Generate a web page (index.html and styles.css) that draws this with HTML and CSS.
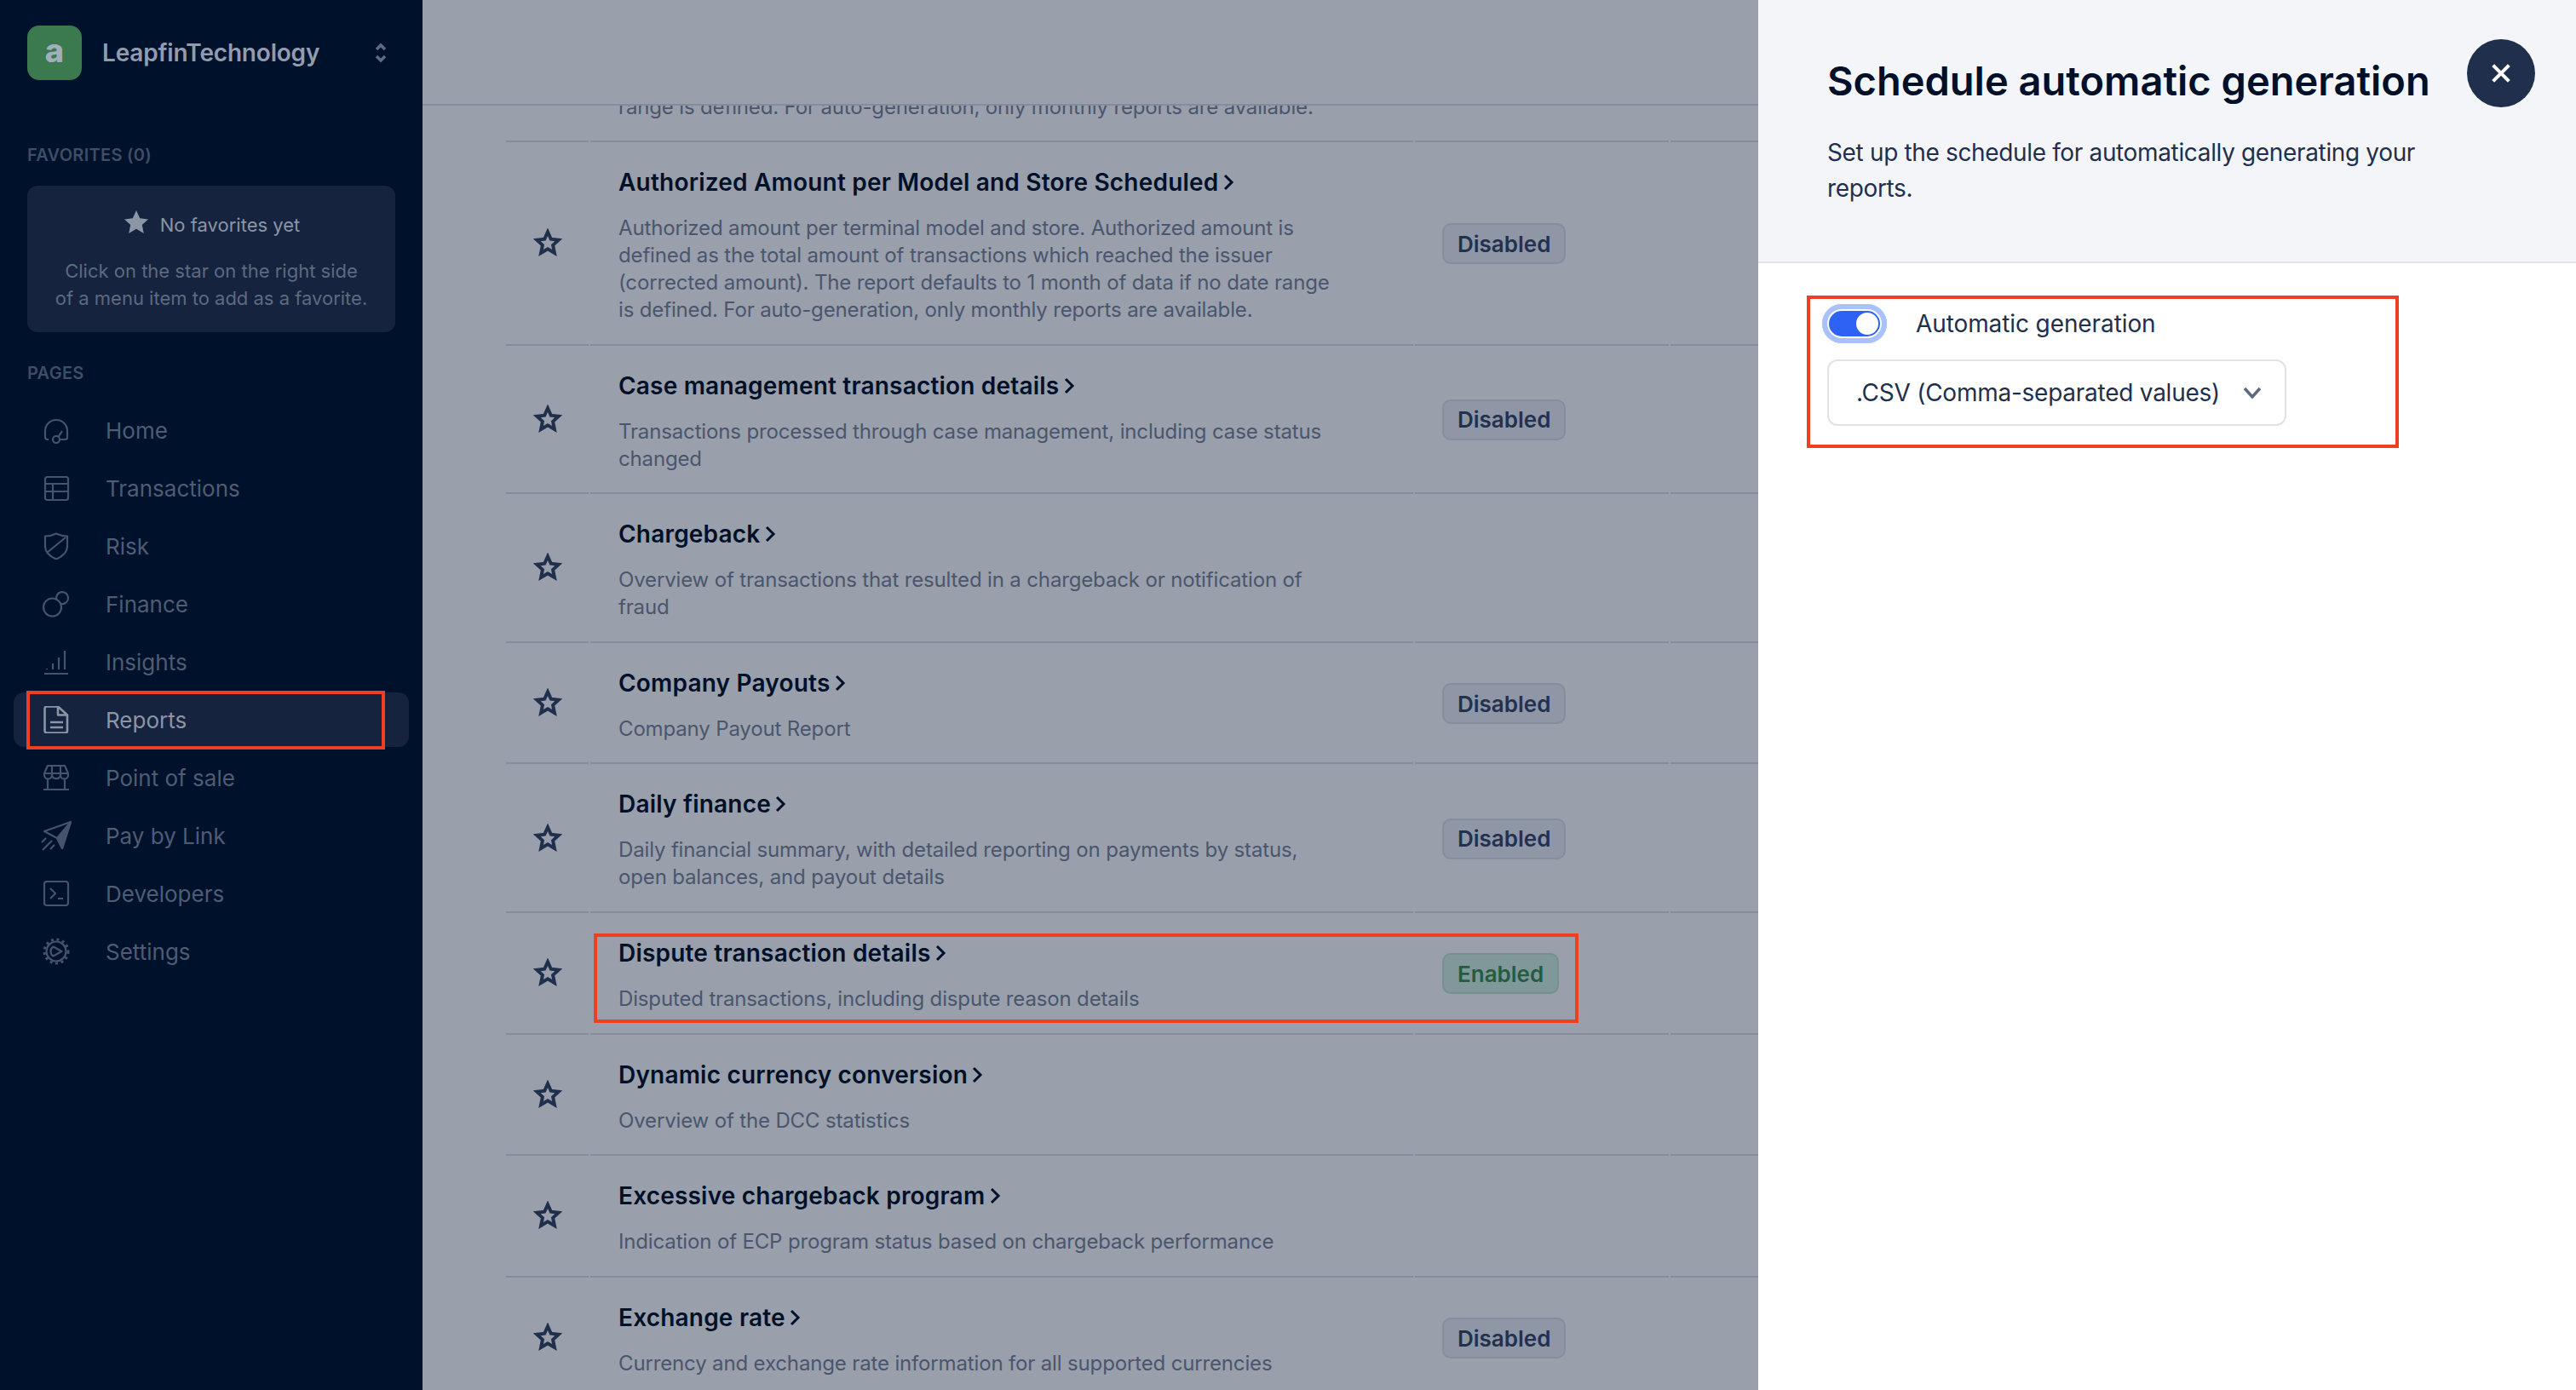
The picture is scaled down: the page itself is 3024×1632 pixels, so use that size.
FILE: index.html
```html
<!DOCTYPE html>
<html lang="en">
<head>
    <meta charset="UTF-8">
    <title>Reports</title>
    <link rel="stylesheet" href="styles.css">
</head>
<body>
    <svg class="sprites" width="0" height="0">
        <symbol id="star" viewBox="0 0 24 24"><path d="M12 3l2.700 6 6.300.7-4.700 4.300 1.300 6.500-5.600-3.300-5.600 3.300 1.300-6.500L3 9.700 9.300 9z"/></symbol>
        <symbol id="caret" viewBox="0 0 14 20"><path d="M3 2l8 8-8 8"/></symbol>
    </svg>

    <aside class="sidebar">
        <div class="brand">
            <span class="brand-logo">a</span>
            <span class="brand-name">LeapfinTechnology</span>
            <svg class="brand-switch" viewBox="0 0 16 26"><path d="M3 9l5-5 5 5M3 17l5 5 5-5"/></svg>
        </div>

        <div class="side-label first">FAVORITES (0)</div>
        <div class="fav-box">
            <div class="fav-title">
                <svg class="fav-star" viewBox="0 0 24 24"><path d="M12 1.500l3.200 7 7.300.8-5.400 5 1.500 7.400-6.600-3.800-6.600 3.800 1.500-7.400-5.400-5 7.300-.8z"/></svg>
                No favorites yet
            </div>
            <p>Click on the star on the right side<br>of a menu item to add as a favorite.</p>
        </div>

        <div class="side-label">PAGES</div>
        <nav class="nav">
            <a class="nav-item">
                <svg viewBox="0 0 32 32"><path d="M7 27H5.500A2.500 2.500 0 0 1 3 24.500V17a13 13 0 0 1 26 0v7.500a2.500 2.500 0 0 1-2.500 2.500H20"/><circle cx="16" cy="27" r="4"/><path d="M18.500 24l4.500-7"/></svg>
                Home
            </a>
            <a class="nav-item">
                <svg viewBox="0 0 32 32"><rect x="3" y="3" width="27" height="27" rx="2.500"/><path d="M3 11h27M3 20h27M12 11v19"/></svg>
                Transactions
            </a>
            <a class="nav-item">
                <svg viewBox="0 0 32 32"><path d="M16 1.500c4 2 8.500 3 13 3v12c0 7-5 11.500-13 15-8-3.500-13-8-13-15v-12c4.500 0 9-1 13-3zM5 24L27 6"/></svg>
                Risk
            </a>
            <a class="nav-item">
                <svg viewBox="0 0 32 32"><circle cx="11.500" cy="20" r="10.500"/><path d="M16.500 11.500a7 7 0 1 1 5.500 4.500"/></svg>
                Finance
            </a>
            <a class="nav-item">
                <svg viewBox="0 0 32 32"><path d="M2 30h28M5 24v1M12 18v7M19 11v14M26 3v22"/></svg>
                Insights
            </a>
            <a class="nav-item active">
                <svg viewBox="0 0 32 32"><path d="M5 .5h13l11 10v18.500a2.500 2.500 0 0 1-2.500 2.500h-21.500a2.500 2.500 0 0 1-2.500-2.500v-26a2.500 2.500 0 0 1 2.500-2.500zM18 1v9.500h11M9 19h15M9 25h15"/></svg>
                Reports
            </a>
            <a class="nav-item">
                <svg viewBox="0 0 32 32"><path d="M6 2h20l4 9v2a4.500 4.500 0 0 1-9 0 4.500 4.500 0 0 1-5 4 4.500 4.500 0 0 1-5-4 4.500 4.500 0 0 1-9 0v-2zM2 11h28M11 2v11M21 2v11M6 18v12M26 18v12M1 30h30"/></svg>
                Point of sale
            </a>
            <a class="nav-item">
                <svg class="plane" viewBox="0 0 36 36"><path d="M4 13L35 2 25 33l-6-12z"/><path class="solid" d="M19 21L35 2 25 33z"/><path d="M2 35l11-11M1 26l5-5M11 34l5-5"/></svg>
                Pay by Link
            </a>
            <a class="nav-item">
                <svg viewBox="0 0 32 32"><rect x="2" y="2" width="28" height="28" rx="3"/><path d="M9 10l6 6-6 6M18 22h6"/></svg>
                Developers
            </a>
            <a class="nav-item">
                <svg viewBox="0 0 32 32"><circle cx="16" cy="16" r="11.500"/><circle class="teeth" cx="16" cy="16" r="14"/><path d="M12.500 10.500l10 5.500-10 5.500a6.500 6.500 0 0 1 0-11z"/></svg>
                Settings
            </a>
        </nav>
    </aside>

    <main class="content">
        <div class="topbar"></div>
        <div class="report-list">
            <div class="row cut">
                <div class="cell-star"></div>
                <div class="cell-main"><p class="desc">range is defined. For auto-generation, only monthly reports are available.</p></div>
                <div class="cell-status"></div>
            </div>
            <div class="row">
                <div class="cell-star"><svg class="star"><use href="#star"/></svg></div>
                <div class="cell-main">
                    <h3>Authorized Amount per Model and Store Scheduled <svg class="caret"><use href="#caret"/></svg></h3>
                    <p class="desc">Authorized amount per terminal model and store. Authorized amount is<br>defined as the total amount of transactions which reached the issuer<br>(corrected amount). The report defaults to 1 month of data if no date range<br>is defined. For auto-generation, only monthly reports are available.</p>
                </div>
                <div class="cell-status"><span class="badge">Disabled</span></div>
            </div>
            <div class="row">
                <div class="cell-star"><svg class="star"><use href="#star"/></svg></div>
                <div class="cell-main">
                    <h3>Case management transaction details <svg class="caret"><use href="#caret"/></svg></h3>
                    <p class="desc">Transactions processed through case management, including case status<br>changed</p>
                </div>
                <div class="cell-status"><span class="badge">Disabled</span></div>
            </div>
            <div class="row">
                <div class="cell-star"><svg class="star"><use href="#star"/></svg></div>
                <div class="cell-main">
                    <h3>Chargeback <svg class="caret"><use href="#caret"/></svg></h3>
                    <p class="desc">Overview of transactions that resulted in a chargeback or notification of<br>fraud</p>
                </div>
                <div class="cell-status"></div>
            </div>
            <div class="row">
                <div class="cell-star"><svg class="star"><use href="#star"/></svg></div>
                <div class="cell-main">
                    <h3>Company Payouts <svg class="caret"><use href="#caret"/></svg></h3>
                    <p class="desc">Company Payout Report</p>
                </div>
                <div class="cell-status"><span class="badge">Disabled</span></div>
            </div>
            <div class="row">
                <div class="cell-star"><svg class="star"><use href="#star"/></svg></div>
                <div class="cell-main">
                    <h3>Daily finance <svg class="caret"><use href="#caret"/></svg></h3>
                    <p class="desc">Daily financial summary, with detailed reporting on payments by status,<br>open balances, and payout details</p>
                </div>
                <div class="cell-status"><span class="badge">Disabled</span></div>
            </div>
            <div class="row">
                <div class="cell-star"><svg class="star"><use href="#star"/></svg></div>
                <div class="cell-main">
                    <h3>Dispute transaction details <svg class="caret"><use href="#caret"/></svg></h3>
                    <p class="desc">Disputed transactions, including dispute reason details</p>
                </div>
                <div class="cell-status"><span class="badge green">Enabled</span></div>
            </div>
            <div class="row">
                <div class="cell-star"><svg class="star"><use href="#star"/></svg></div>
                <div class="cell-main">
                    <h3>Dynamic currency conversion <svg class="caret"><use href="#caret"/></svg></h3>
                    <p class="desc">Overview of the DCC statistics</p>
                </div>
                <div class="cell-status"></div>
            </div>
            <div class="row">
                <div class="cell-star"><svg class="star"><use href="#star"/></svg></div>
                <div class="cell-main">
                    <h3>Excessive chargeback program <svg class="caret"><use href="#caret"/></svg></h3>
                    <p class="desc">Indication of ECP program status based on chargeback performance</p>
                </div>
                <div class="cell-status"></div>
            </div>
            <div class="row">
                <div class="cell-star"><svg class="star"><use href="#star"/></svg></div>
                <div class="cell-main">
                    <h3>Exchange rate <svg class="caret"><use href="#caret"/></svg></h3>
                    <p class="desc">Currency and exchange rate information for all supported currencies</p>
                </div>
                <div class="cell-status"><span class="badge">Disabled</span></div>
            </div>
        </div>
    </main>

    <aside class="panel">
        <header class="panel-head">
            <div class="panel-title-row">
                <h2>Schedule automatic generation</h2>
                <button class="close-btn"><svg viewBox="0 0 24 24"><path d="M4 4l16 16M20 4L4 20"/></svg></button>
            </div>
            <p>Set up the schedule for automatically generating your<br>reports.</p>
        </header>
        <div class="panel-body">
            <div class="toggle-row">
                <span class="toggle"><span class="knob"></span></span>
                <span>Automatic generation</span>
            </div>
            <div class="select">
                <span class="select-value">.CSV (Comma-separated values)</span>
                <svg viewBox="0 0 24 24"><path d="M3 7l9 10 9-10"/></svg>
            </div>
        </div>
    </aside>

    <div class="mark mark-nav"></div>
    <div class="mark mark-row"></div>
    <div class="mark mark-panel"></div>
</body>
</html>
```

FILE: styles.css
```css
* {
    box-sizing: border-box;
}
html, body {
    height: 100%;
}
body {
    margin: 0;
    display: flex;
    height: 1632px;
    overflow: hidden;
    position: relative;
    font-family: Inter, "Noto Sans", sans-serif;
    background: #999fab;
    color: #001029;
}
.sprites {
    position: absolute;
}

/* sidebar */
.sidebar {
    width: 496px;
    flex: none;
    background: #00112b;
}
.brand {
    display: flex;
    align-items: center;
    height: 64px;
    margin-top: 30px;
    padding: 0 32px;
}
.brand-logo {
    width: 64px;
    height: 64px;
    flex: none;
    display: flex;
    align-items: center;
    justify-content: center;
    padding-bottom: 6px;
    border-radius: 14px;
    background: #3a7a4e;
    color: #a3aebd;
    font-size: 38px;
    font-weight: 800;
}
.brand-name {
    margin-left: 24px;
    font-size: 28px;
    font-weight: 600;
    letter-spacing: -.2px;
    color: #929cae;
}
.brand-switch {
    width: 16px;
    height: 26px;
    margin-left: auto;
    margin-right: 9px;
    fill: none;
    stroke: #5f6b80;
    stroke-width: 3.500;
}
.side-label {
    height: 24px;
    margin-top: 36px;
    padding-left: 32px;
    font-size: 20px;
    line-height: 24px;
    font-weight: 600;
    letter-spacing: .3px;
    color: #3f4d66;
}
.side-label.first {
    margin-top: 76px;
}
.fav-box {
    height: 172px;
    margin: 24px 32px 0;
    padding-top: 30px;
    border-radius: 12px;
    background: #15233e;
    text-align: center;
}
.fav-title {
    display: flex;
    align-items: center;
    justify-content: center;
    gap: 12px;
    height: 32px;
    font-size: 22px;
    color: #8a95a6;
}
.fav-star {
    width: 32px;
    height: 32px;
    margin-top: -6px;
    fill: #8a95a6;
}
.fav-box p {
    margin: 22px 0 0;
    font-size: 22px;
    line-height: 32px;
    color: #5d6a80;
}
.nav {
    display: flex;
    flex-direction: column;
    gap: 4px;
    margin-top: 23px;
    padding: 0 16px;
}
.nav-item {
    display: flex;
    align-items: center;
    gap: 42px;
    height: 64px;
    padding-left: 34px;
    border-radius: 12px;
    font-size: 26px;
    color: #4f5c73;
}
.nav-item svg {
    width: 32px;
    height: 32px;
    flex: none;
    fill: none;
    stroke: #46536b;
    stroke-width: 2.200;
    stroke-linejoin: round;
}
.nav-item svg .solid {
    fill: #46536b;
}
.nav-item svg .teeth {
    stroke-width: 3;
    stroke-dasharray: 3 3.600;
}
.nav-item svg.plane {
    width: 36px;
    height: 36px;
    margin: 0 -2px;
}
.nav-item.active {
    background: #15233e;
    color: #8a95a6;
}
.nav-item.active svg {
    stroke: #8a95a6;
    stroke-width: 2.600;
}

/* report list behind the panel */
.content {
    flex: 1;
    min-width: 0;
}
.topbar {
    height: 124px;
    border-bottom: 2px solid #858c9b;
}
.report-list {
    padding-left: 98px;
}
.row {
    display: grid;
    grid-template-columns: 97px 966px 298px 1fr;
    column-gap: 2px;
}
.row > div, .row::after {
    border-bottom: 2px solid #858c9b;
}
.row::after {
    content: "";
}
.cell-star {
    display: flex;
    align-items: center;
    justify-content: center;
}
.cell-main {
    padding: 31px 32px 23.600px 33px;
}
.cell-status {
    display: flex;
    align-items: center;
    padding-left: 32px;
}
.row.cut {
    grid-template-rows: 43px;
    overflow: hidden;
}
.row.cut .cell-main {
    padding: 0 0 23px 33px;
    display: flex;
    align-items: flex-end;
    overflow: hidden;
}
.star {
    width: 34px;
    height: 34px;
    fill: none;
    stroke: #1f2f4c;
    stroke-width: 2.800;
}
.row h3 {
    margin: 0;
    font-size: 28px;
    line-height: 32px;
    font-weight: 600;
    letter-spacing: .2px;
    color: #001029;
}
.caret {
    width: 14px;
    height: 20px;
    margin-left: -3px;
    fill: none;
    stroke: #001029;
    stroke-width: 3;
}
.desc {
    margin: 22px 0 0;
    font-size: 24px;
    line-height: 32px;
    letter-spacing: -.15px;
    color: #4a566d;
}
.row.cut .desc {
    margin: 0;
    flex: none;
}
.badge {
    display: inline-flex;
    align-items: center;
    height: 48px;
    margin-top: 2px;
    padding: 0 16px;
    border: 2px solid #868d9c;
    border-radius: 10px;
    background: #8f96a5;
    font-size: 26px;
    font-weight: 600;
    color: #23314f;
}
.badge.green {
    background: #80989a;
    border-color: #749090;
    color: #255c3e;
}

/* schedule panel */
.panel {
    position: absolute;
    top: 0;
    right: 0;
    bottom: 0;
    width: 960px;
    background: #fff;
}
.panel-head {
    height: 309px;
    padding: 46px 48px 0 81px;
    background: #f3f5f9;
    border-bottom: 2px solid #e2e4e9;
}
.panel-title-row {
    display: flex;
    justify-content: space-between;
}
.panel-head h2 {
    margin: 24px 0 0;
    font-size: 47px;
    line-height: 50px;
    font-weight: 600;
    color: #001029;
}
.close-btn {
    width: 80px;
    height: 80px;
    padding: 0;
    border: none;
    border-radius: 50%;
    background: #1f2f4c;
    display: flex;
    align-items: center;
    justify-content: center;
}
.close-btn svg {
    width: 28px;
    height: 28px;
    fill: none;
    stroke: #fff;
    stroke-width: 3.500;
}
.panel-head p {
    margin: 32px 0 0;
    font-size: 28px;
    line-height: 42px;
    letter-spacing: -.35px;
    color: #1f2f4c;
}
.panel-body {
    padding: 48px 0 0 81px;
    font-size: 28px;
    letter-spacing: -.1px;
    color: #1f2f4c;
}
.toggle-row {
    display: flex;
    align-items: center;
    gap: 34px;
    height: 46px;
    margin-left: -6px;
}
.toggle {
    position: relative;
    width: 76px;
    height: 46px;
    border-radius: 23px;
    background: #2e62f5;
    box-shadow: inset 0 0 0 6px #a9c1fd, inset 0 0 0 8px #fff;
}
.knob {
    position: absolute;
    top: 10px;
    right: 10px;
    width: 26px;
    height: 26px;
    border-radius: 50%;
    background: #fff;
}
.select {
    display: flex;
    align-items: center;
    justify-content: space-between;
    width: 539px;
    height: 78px;
    margin-top: 19px;
    padding: 0 26px 0 32px;
    border: 2px solid #e0e2e8;
    border-radius: 12px;
    white-space: nowrap;
}
.select-value {
    letter-spacing: -.25px;
}
.select svg {
    width: 24px;
    height: 24px;
    fill: none;
    stroke: #5d6a80;
    stroke-width: 3.500;
}

/* red annotation boxes */
.mark {
    position: absolute;
    border: 4px solid #ee3f22;
}
.mark-nav {
    left: 31px;
    top: 811px;
    width: 421px;
    height: 69px;
}
.mark-row {
    left: 697px;
    top: 1096px;
    width: 1156px;
    height: 105px;
}
.mark-panel {
    left: 2121px;
    top: 347px;
    width: 695px;
    height: 179px;
}
```
